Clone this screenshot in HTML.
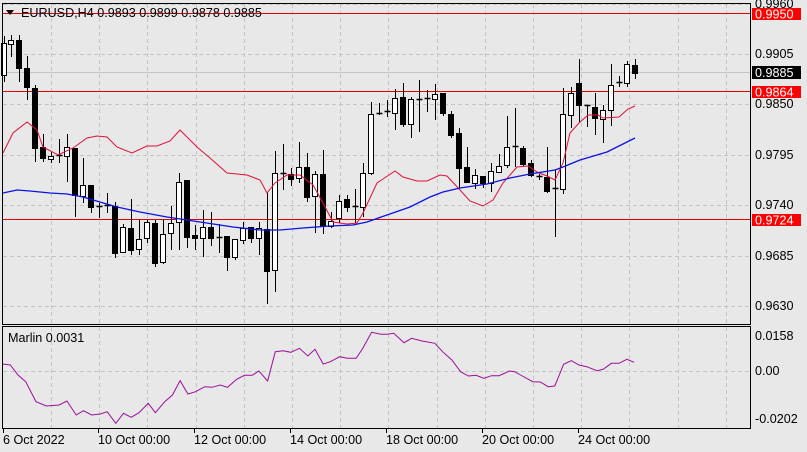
<!DOCTYPE html>
<html><head><meta charset="utf-8"><style>
html,body{margin:0;padding:0;background:#e8e8e8;width:807px;height:452px;overflow:hidden;font-family:"Liberation Sans","DejaVu Sans",sans-serif;}
svg{position:absolute;left:0;top:0}
</style></head><body>
<svg id="s" width="807" height="452" xmlns="http://www.w3.org/2000/svg">
<rect x="0" y="0" width="807" height="452" fill="#e8e8e8"/>
<g id="grid" stroke="#c4c4c4" stroke-dasharray="4,3" stroke-width="1"></g>
<line x1="3" y1="72.5" x2="750" y2="72.5" stroke="#c4c4c4" stroke-width="1"/>
<line x1="3" y1="13.5" x2="750" y2="13.5" stroke="#e00000" stroke-width="1"/>
<line x1="3" y1="91.5" x2="750" y2="91.5" stroke="#e00000" stroke-width="1"/>
<line x1="3" y1="219.5" x2="750" y2="219.5" stroke="#e00000" stroke-width="1"/>
<g id="candles"></g>
<polyline id="red" fill="none" stroke="#e0103a" stroke-width="1"/>
<polyline id="blue" fill="none" stroke="#0a14e0" stroke-width="1.3"/>
<polyline id="ind" fill="none" stroke="#9a109a" stroke-width="1"/>
<rect x="2.5" y="3.5" width="748" height="321" fill="none" stroke="#000" stroke-width="1"/>
<rect x="2.5" y="326.5" width="748" height="102" fill="none" stroke="#000" stroke-width="1"/>
<g id="ticks" stroke="#000"></g>
<path d="M6 10 L14 10 L10 15 Z" fill="#000"/>
<text x="21" y="17" font-size="12.6" fill="#000">EURUSD,H4  0.9893 0.9899 0.9878 0.9885</text>
<text x="8" y="342" font-size="12.6" fill="#000">Marlin 0.0031</text>
<g font-size="12.6" fill="#000">
<text x="755" y="8">0.9960</text>
<text x="755" y="58">0.9905</text>
<text x="755" y="108">0.9850</text>
<text x="755" y="159">0.9795</text>
<text x="755" y="209">0.9740</text>
<text x="755" y="260">0.9685</text>
<text x="755" y="310">0.9630</text>
<text x="755" y="340">0.0158</text>
<text x="755" y="375">0.00</text>
<text x="755" y="423">-0.0202</text>
</g>
<rect x="752" y="8" width="49" height="12" fill="#ff0000"/>
<text x="755" y="18.5" font-size="12.6" fill="#fff">0.9950</text>
<rect x="752" y="66" width="49" height="13" fill="#000"/>
<text x="755" y="77" font-size="12.6" fill="#fff">0.9885</text>
<rect x="752" y="86" width="49" height="12" fill="#ff0000"/>
<text x="755" y="96.5" font-size="12.6" fill="#fff">0.9864</text>
<rect x="752" y="214" width="49" height="12" fill="#ff0000"/>
<text x="755" y="224.5" font-size="12.6" fill="#fff">0.9724</text>
<g font-size="12.6" fill="#000">
<text x="3" y="444">6 Oct 2022</text>
<text x="98" y="444">10 Oct 00:00</text>
<text x="194" y="444">12 Oct 00:00</text>
<text x="290" y="444">14 Oct 00:00</text>
<text x="386" y="444">18 Oct 00:00</text>
<text x="482" y="444">20 Oct 00:00</text>
<text x="578" y="444">24 Oct 00:00</text>
</g>
</svg>
<script>
var NS="http://www.w3.org/2000/svg";
function el(p,n,a){var e=document.createElementNS(NS,n);for(var k in a)e.setAttribute(k,a[k]);p.appendChild(e);return e;}
var g=document.getElementById('grid');
[4,54,104,155,205,256,306].forEach(function(y){el(g,'line',{x1:3,x2:750,y1:y+.5,y2:y+.5});});
el(g,'line',{x1:3,x2:750,y1:371.5,y2:371.5});
for(var x=51;x<750;x+=48.2){var xx=Math.round(x)+.5;el(g,'line',{x1:xx,x2:xx,y1:4,y2:324});el(g,'line',{x1:xx,x2:xx,y1:327,y2:428});}
var t=document.getElementById('ticks');
[3,98,194,290,386,482,578].forEach(function(x){el(t,'line',{x1:x+.5,x2:x+.5,y1:428,y2:433});});
var C=[[4,36,82,43,75,1],[11,35,57,40,44,1],[19,35,82,40,68,0],[27,56,100,68,87,0],[35,85,162,88,148,0],[43,134,162,147,158,0],[51,152,163,156,159,1],[59,139,163,155,157,0],[67,134,182,147,156,1],[75,148,217,148,195,0],[83,158,203,185,196,1],[91,185,213,185,207,0],[99,203,218,206,208,1],[107,193,213,205,207,1],[115,202,258,206,253,0],[123,224,253,227,252,1],[131,199,255,228,250,0],[139,220,255,239,249,1],[147,220,243,222,238,1],[155,220,267,223,263,0],[163,219,264,234,262,1],[171,206,250,223,233,1],[179,173,250,182,222,1],[187,180,248,180,237,0],[195,225,250,235,238,0],[203,210,257,227,238,1],[211,212,246,227,238,0],[219,224,253,237,238,0],[227,236,271,236,257,0],[235,239,260,239,257,1],[243,222,244,228,240,1],[251,227,243,227,238,0],[259,222,255,228,238,1],[267,193,304,229,271,0],[275,151,292,173,270,1],[283,144,190,173,175,0],[291,168,186,174,179,0],[299,142,183,167,178,1],[307,153,202,167,197,0],[315,171,233,174,196,1],[323,150,234,174,226,0],[331,212,228,221,226,1],[339,195,223,201,218,1],[347,195,212,199,207,0],[355,189,223,206,207,0],[363,163,217,173,207,1],[371,102,175,114,173,1],[379,103,115,113,114,0],[387,100,117,111,113,0],[395,89,130,98,113,1],[403,83,127,97,124,0],[411,97,138,99,124,1],[419,80,132,99,100,0],[427,90,112,98,99,0],[435,84,120,94,99,1],[443,93,116,93,113,0],[451,111,138,114,135,0],[459,128,188,133,168,0],[467,147,183,167,182,0],[475,169,189,175,183,1],[483,176,188,176,183,0],[491,163,192,171,183,1],[499,154,172,166,172,1],[507,116,168,147,165,1],[515,108,167,146,148,0],[523,146,166,148,164,0],[531,160,177,163,175,0],[539,174,180,176,177,0],[547,147,193,177,191,0],[555,170,237,188,189,0],[563,88,194,114,189,1],[571,87,128,93,115,1],[579,59,122,83,105,0],[587,105,127,105,107,0],[595,93,135,107,118,0],[603,105,143,110,119,1],[611,64,126,85,110,1],[619,76,87,82,84,1],[627,61,87,64,83,1],[635,59,79,65,73,0]];
var cg=document.getElementById('candles');
C.forEach(function(c){var x=c[0]+.5;el(cg,'line',{x1:x,x2:x,y1:c[1],y2:c[2],stroke:'#000','stroke-width':1});
var h=Math.max(1,c[4]-c[3]);
if(h<=2){el(cg,'line',{x1:x-3,x2:x+3,y1:c[3]+.5,y2:c[3]+.5,stroke:'#000','stroke-width':1.5});}
else el(cg,'rect',{x:c[0]-2.5,y:c[3]+.5,width:5,height:h,fill:c[5]?'#fff':'#000',stroke:'#000','stroke-width':1});});
var R=[[3,153],[13,133],[27,122],[37,130],[43,147],[58,155],[73,148],[87,138],[97,136],[107,137],[117,147],[132,153],[147,146],[157,146],[170,141],[180,130],[197,147],[210,158],[227,173],[247,175],[260,180],[267,193],[275,183],[287,175],[300,175],[313,185],[323,203],[333,222],[347,224],[357,223],[363,213],[377,183],[395,171],[403,177],[417,181],[427,181],[440,175],[447,176],[460,190],[470,201],[483,206],[493,200],[503,183],[517,167],[528,166],[537,172],[547,176],[555,180],[563,163],[570,133],[579,123],[588,115],[598,115],[603,118],[619,117],[628,109],[635,106]];
var B=[[3,193],[17,190],[30,191],[50,193],[67,194],[83,197],[100,202],[117,207],[140,212],[167,217],[200,222],[233,227],[260,230],[280,230],[303,228],[330,226],[353,225],[367,222],[387,215],[410,207],[430,197],[443,192],[460,188],[487,184],[510,178],[530,174],[555,170],[563,167],[580,160],[607,152],[635,138]];
var I=[[5,192],[20,195],[35,225],[50,245],[70,305],[90,318],[115,315],[130,303],[148,345],[162,332],[178,345],[195,342],[208,335],[225,370],[240,340],[255,352],[270,338],[288,310],[302,338],[320,305],[335,285],[350,242],[365,282],[380,275],[398,260],[412,262],[428,255],[442,262],[460,238],[475,226],[490,226],[503,213],[520,243],[535,155],[550,152],[565,157],[582,145],[598,168],[612,148],[628,192],[642,185],[660,170],[675,175],[692,175],[705,145],[722,97],[740,103],[752,103],[765,100],[785,128],[800,115],[820,123],[845,130],[860,155],[878,180],[895,215],[910,228],[925,226],[940,235],[955,227],[970,227],[990,213],[1000,215],[1015,228],[1035,245],[1050,246],[1065,260],[1078,258],[1095,193],[1110,182],[1125,195],[1140,200],[1160,212],[1172,208],[1188,190],[1203,190],[1218,178],[1232,187]];
document.getElementById('red').setAttribute('points',R.map(function(p){return p.join(',')}).join(' '));
document.getElementById('blue').setAttribute('points',B.map(function(p){return p.join(',')}).join(' '));
document.getElementById('ind').setAttribute('points',I.map(function(p){return (p[0]/1.943).toFixed(1)+','+(300+p[1]/3).toFixed(1)}).join(' '));
</script>
</body></html>
